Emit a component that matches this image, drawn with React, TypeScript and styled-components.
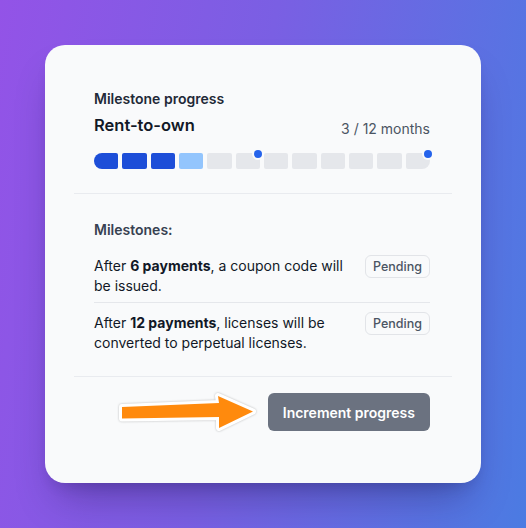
import React from "react";
import styled, { createGlobalStyle } from "styled-components";

const GlobalStyle = createGlobalStyle`
  html, body {
    margin: 0;
    padding: 0;
  }
  body {
    font-family: Inter, "Noto Sans", "Liberation Sans", sans-serif;
    -webkit-font-smoothing: antialiased;
  }
`;

const TOTAL_MONTHS = 12;
const PAID_MONTHS = 3;
const MILESTONE_MONTHS = [6, 12];

const milestones = [
  { count: 6, rest: ", a coupon code will be issued." },
  { count: 12, rest: ", licenses will be converted to perpetual licenses." },
];

const Page = styled.div`
  width: 526px;
  height: 528px;
  display: flex;
  align-items: center;
  justify-content: center;
  background: linear-gradient(100deg, #9353e7 0%, #7a5fe3 45%, #4b7be2 100%);
`;

const Card = styled.div`
  width: 436px;
  height: 438px;
  box-sizing: border-box;
  padding: 24px 29px;
  border-radius: 20px;
  background-color: #f9fafb;
  box-shadow: 0 25px 40px -14px rgba(20, 10, 60, 0.35),
    0 8px 16px -8px rgba(20, 10, 60, 0.2);
  display: flex;
  flex-direction: column;
`;

const Section = styled.div<{ $top?: number; $bottom?: number }>`
  padding: ${(p) => p.$top ?? 20}px 22px ${(p) => p.$bottom ?? 20}px 20px;
  & + & {
    border-top: 1px solid #e9ebef;
  }
`;

const Eyebrow = styled.div`
  font-size: 14px;
  line-height: 20px;
  font-weight: 600;
  color: #1f2937;
`;

const TitleRow = styled.div`
  display: flex;
  justify-content: space-between;
  align-items: flex-start;
  margin-top: 4px;
`;

const Title = styled.div`
  font-size: 16.5px;
  line-height: 24px;
  font-weight: 600;
  color: #111827;
`;

const Months = styled.div`
  margin-top: 6px;
  font-size: 14px;
  line-height: 20px;
  color: #4b5563;
`;

const Bar = styled.div`
  display: flex;
  gap: 4px;
  height: 16px;
  margin-top: 14px;
`;

const Segment = styled.div<{ $state: "done" | "current" | "empty"; $first: boolean; $last: boolean }>`
  position: relative;
  flex: 1;
  background-color: ${(p) =>
    p.$state === "done" ? "#1d4ed8" : p.$state === "current" ? "#93c5fd" : "#e5e7eb"};
  border-radius: ${(p) => (p.$first ? "8px 2px 2px 8px" : p.$last ? "2px 8px 8px 2px" : "2px")};
`;

const Dot = styled.span`
  position: absolute;
  top: -3px;
  right: -2px;
  width: 8px;
  height: 8px;
  border-radius: 50%;
  background-color: #2563eb;
  box-shadow: 0 0 0 2px #f9fafb;
`;

const Label = styled.div`
  font-size: 14px;
  line-height: 20px;
  font-weight: 600;
  color: #374151;
  margin-bottom: 6px;
`;

const Row = styled.div`
  display: flex;
  justify-content: space-between;
  align-items: flex-start;
  gap: 16px;
  padding: 9px 0 6px;
  & + & {
    border-top: 1px solid #e5e7eb;
  }
`;

const RowText = styled.div`
  margin-top: 1px;
  max-width: 270px;
  font-size: 14px;
  line-height: 20px;
  color: #111827;
  b {
    font-weight: 700;
  }
`;

const Badge = styled.span`
  flex-shrink: 0;
  box-sizing: border-box;
  height: 23px;
  padding: 0 7px;
  display: inline-flex;
  align-items: center;
  border: 1px solid #e2e4e8;
  border-radius: 6px;
  background-color: #f9fafb;
  font-size: 12.5px;
  font-weight: 500;
  color: #4b5563;
`;

const Footer = styled.div`
  display: flex;
  justify-content: flex-end;
  align-items: center;
  gap: 10px;
`;

const Button = styled.button`
  height: 38px;
  padding: 0 15px;
  border: none;
  border-radius: 6px;
  background-color: #6b7280;
  color: #ffffff;
  font-family: inherit;
  font-size: 14px;
  font-weight: 600;
  cursor: pointer;
`;

const ArrowSvg = styled.svg`
  display: block;
  margin-top: 2px;
  filter: drop-shadow(0 0 1px rgba(0, 0, 0, 0.25));
`;

function Arrow() {
  return (
    <ArrowSvg width="140" height="42" viewBox="0 0 140 42">
      <path
        d="M4 15 L101 11 L100 4 L135 19.5 L101 36 L101 25 L4 26.5 Z"
        fill="#ff8a0d"
        stroke="#ffffff"
        strokeWidth="6"
        strokeLinejoin="round"
        paintOrder="stroke"
      />
    </ArrowSvg>
  );
}

function ProgressBar() {
  return (
    <Bar>
      {Array.from({ length: TOTAL_MONTHS }).map((_, i) => {
        const month = i + 1;
        const state = month <= PAID_MONTHS ? "done" : month === PAID_MONTHS + 1 ? "current" : "empty";
        return (
          <Segment key={month} $state={state} $first={i === 0} $last={i === TOTAL_MONTHS - 1}>
            {MILESTONE_MONTHS.includes(month) && <Dot />}
          </Segment>
        );
      })}
    </Bar>
  );
}

export default function App() {
  return (
    <>
      <GlobalStyle />
      <Page>
        <Card>
          <Section $bottom={24}>
            <Eyebrow>Milestone progress</Eyebrow>
            <TitleRow>
              <Title>Rent-to-own</Title>
              <Months>
                {PAID_MONTHS} / {TOTAL_MONTHS} months
              </Months>
            </TitleRow>
            <ProgressBar />
          </Section>
          <Section $top={26} $bottom={17}>
            <Label>Milestones:</Label>
            {milestones.map((m) => (
              <Row key={m.count}>
                <RowText>
                  After <b>{m.count} payments</b>
                  {m.rest}
                </RowText>
                <Badge>Pending</Badge>
              </Row>
            ))}
          </Section>
          <Section $top={13}>
            <Footer>
              <Arrow />
              <Button>Increment progress</Button>
            </Footer>
          </Section>
        </Card>
      </Page>
    </>
  );
}
